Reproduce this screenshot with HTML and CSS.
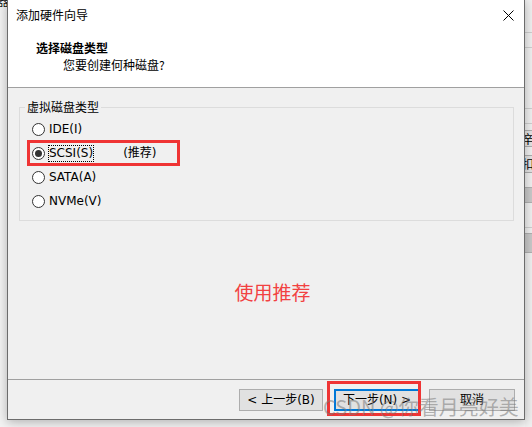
FILE: index.html
```html
<!DOCTYPE html>
<html lang="zh-CN">
<head>
<meta charset="utf-8">
<title>添加硬件向导</title>
<link rel="stylesheet" href="styles.css">
</head>
<body>
<div class="screen">
  <span class="bg-frag">器</span>
  <div class="bg-win">
    <div class="bw-line" style="top:32px"></div>
    <div class="bw-line" style="top:47px"></div>
    <div class="bw-line" style="top:108px"></div>
    <div class="bw-line" style="top:123px"></div>
    <div class="bw-btn" style="top:130px;height:17px">辛</div>
    <div class="bw-btn" style="top:155px;height:18px">扣</div>
    <div class="bw-bar" style="top:187px;height:16px"></div>
    <div class="bw-line" style="top:227px"></div>
    <div class="bw-bar" style="top:233px;height:20px"></div>
  </div>

  <div class="dialog">
    <div class="header">
      <div class="titlebar">
        <span class="title">添加硬件向导</span>
        <svg class="close" width="11" height="11" viewBox="0 0 11 11"><path d="M0.5 0.5 L10.5 10.5 M10.5 0.5 L0.5 10.5" stroke="#000" stroke-width="1" fill="none"/></svg>
      </div>
      <div class="h-title">选择磁盘类型</div>
      <div class="h-sub">您要创建何种磁盘?</div>
    </div>

    <div class="body">
      <fieldset class="group">
        <legend class="legend">虚拟磁盘类型</legend>
        <div class="opt"><span class="radio"></span><span class="lbl">IDE(I)</span></div>
        <div class="opt"><span class="radio on"></span><span class="lbl focus">SCSI(S)</span><span class="rec">(推荐)</span></div>
        <div class="opt"><span class="radio"></span><span class="lbl">SATA(A)</span></div>
        <div class="opt"><span class="radio"></span><span class="lbl">NVMe(V)</span></div>
      </fieldset>
      <div class="note">使用推荐</div>
    </div>

    <div class="footer">
      <button class="btn back">&lt; 上一步(B)</button>
      <button class="btn next">下一步(N) &gt;</button>
      <button class="btn cancel">取消</button>
    </div>
  </div>

  <div class="mark mark-scsi"></div>
  <div class="mark mark-next"></div>
  <div class="watermark">CSDN @你看月亮好美</div>
</div>
</body>
</html>
```
FILE: styles.css
```css
* { box-sizing: border-box; }
html, body { margin: 0; padding: 0; }
body {
  width: 532px;
  height: 427px;
  overflow: hidden;
  font-family: "DejaVu Sans", "Noto Sans CJK SC", sans-serif;
  font-size: 12px;
  color: #000;
}
.screen {
  position: relative;
  width: 532px;
  height: 427px;
  overflow: hidden;
  background: #f3f3f3;
}
.bg-frag {
  position: absolute;
  left: -3px;
  top: -6px;
  font-family: "Noto Sans CJK SC", sans-serif;
  font-size: 12px;
  line-height: 14px;
  color: #111;
}
.bg-win {
  position: absolute;
  left: 525px;
  top: 0;
  width: 20px;
  height: 427px;
  background: #f0f0f0;
}
.bw-line {
  position: absolute;
  left: 0;
  right: 0;
  height: 1px;
  background: #cfcfcf;
}
.bw-btn {
  position: absolute;
  left: 0;
  right: 0;
  background: #e3e3e3;
  border-top: 1px solid #adadad;
  border-bottom: 1px solid #adadad;
  font-family: "Noto Sans CJK SC", sans-serif;
  font-size: 12px;
  line-height: 16px;
  text-indent: -3px;
}
.bw-bar {
  position: absolute;
  left: 0;
  right: 0;
  background: #c9c9c9;
  border-top: 1px solid #b0b0b0;
  border-bottom: 1px solid #b0b0b0;
}

.dialog {
  position: absolute;
  left: 7px;
  top: -1px;
  width: 518px;
  height: 421px;
  border: 1px solid #6c6c6c;
  background: #f0f0f0;
  display: flex;
  flex-direction: column;
  box-shadow: 0 2px 10px rgba(0,0,0,0.28);
}
.header {
  height: 88px;
  flex: none;
  background: #fff;
  border-bottom: 1px solid #a0a0a0;
}
.titlebar {
  height: 30px;
  display: flex;
  align-items: center;
  justify-content: space-between;
  padding: 0 10px 0 8px;
}
.title {
  font-family: "Noto Sans CJK SC", sans-serif;
  font-size: 12px;
  line-height: 16px;
}
.close { display: block; }
.h-title {
  margin-top: 9px;
  padding-left: 28px;
  font-family: "Noto Sans CJK SC", sans-serif;
  font-weight: bold;
  font-size: 12px;
  line-height: 17px;
}
.h-sub {
  padding-left: 55px;
  font-family: "Noto Sans CJK SC", sans-serif;
  font-size: 12px;
  line-height: 17px;
}

.body {
  flex: 1;
  padding: 11px 10px 0 11px;
  display: flex;
  flex-direction: column;
}
.group {
  margin: 0;
  padding: 2px 0 7px 0;
  border: 1px solid #dcdcdc;
  min-width: 0;
}
.legend {
  margin-left: 5px;
  padding: 0 2px;
  font-family: "Noto Sans CJK SC", sans-serif;
  font-size: 12px;
  line-height: 16px;
}
.opt {
  height: 24px;
  display: flex;
  align-items: center;
  padding-left: 12px;
}
.radio {
  width: 13px;
  height: 13px;
  border: 1px solid #333;
  border-radius: 50%;
  background: #fff;
  display: flex;
  align-items: center;
  justify-content: center;
  flex: none;
}
.radio.on::after {
  content: "";
  width: 7px;
  height: 7px;
  border-radius: 50%;
  background: #333;
}
.lbl {
  margin-left: 3px;
  line-height: 15px;
  border: 1px dotted transparent;
  margin-top: 1px;
}
.lbl.focus { border-color: #000; }
.rec {
  margin-left: 29px;
  line-height: 15px;
}
.note {
  margin-top: 58px;
  padding-left: 12px;
  text-align: center;
  font-family: "Noto Sans CJK SC", sans-serif;
  font-size: 19px;
  line-height: 26px;
  color: #f24141;
}

.footer {
  height: 40px;
  flex: none;
  border-top: 1px solid #a0a0a0;
  display: flex;
  justify-content: flex-end;
  align-items: flex-start;
  padding: 9px 9px 0 0;
  gap: 0;
}
.btn {
  height: 22px;
  margin: 0;
  padding: 0;
  background: #e1e1e1;
  border: 1px solid #adadad;
  font-family: "DejaVu Sans", "Noto Sans CJK SC", sans-serif;
  font-size: 12px;
  line-height: 18px;
  color: #000;
}
.back { width: 84px; margin-right: 11px; }
.next { width: 86px; margin-right: 9px; border: 2px solid #0078d7; }
.cancel { width: 86px; }

.mark {
  position: absolute;
  border: 3px solid #ef3434;
}
.mark-scsi { left: 27px; top: 140px; width: 153px; height: 26px; }
.mark-next { left: 327px; top: 381px; width: 94px; height: 35px; }
.watermark {
  position: absolute;
  left: 323px;
  top: 394px;
  font-family: "Noto Sans CJK SC", sans-serif;
  font-size: 20px;
  line-height: 26px;
  color: rgba(120,120,120,0.55);
  white-space: nowrap;
}
```
